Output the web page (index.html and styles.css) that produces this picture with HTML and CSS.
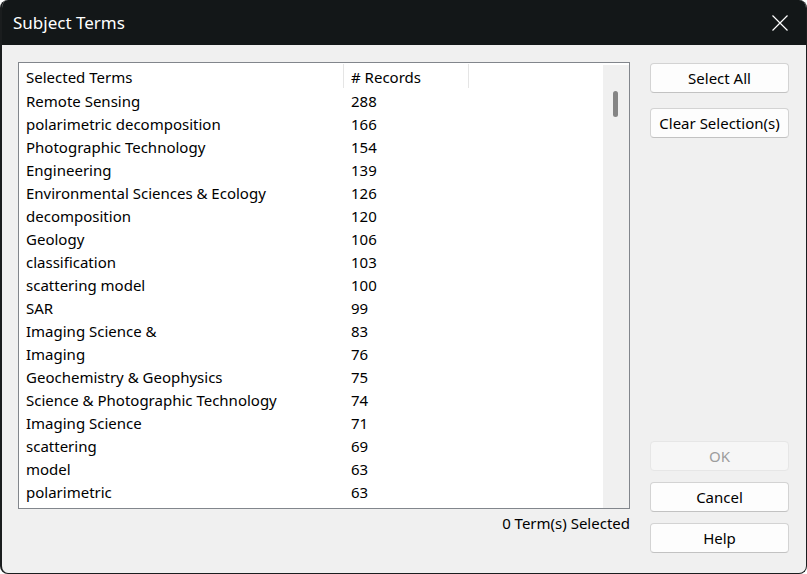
FILE: index.html
```html
<!DOCTYPE html>
<html>
<head>
<meta charset="utf-8">
<link rel="stylesheet" href="styles.css">
</head>
<body>
<div class="window">
  <div class="titlebar">
    <span class="title">Subject Terms</span>
    <svg class="close" width="16" height="16" viewBox="0 0 16 16"><path d="M0.5 0.5 L15.5 15.5 M15.5 0.5 L0.5 15.5" stroke="#ffffff" stroke-width="1.2" fill="none"/></svg>
  </div>
  <div class="content">
    <div class="left">
      <div class="listbox">
        <div class="table">
          <div class="row header">
            <div class="c1">Selected Terms</div>
            <div class="c2">#&nbsp;Records</div>
            <div class="c3"></div>
          </div>
          <div class="row"><div class="c1">Remote Sensing</div><div class="c2">288</div></div>
          <div class="row"><div class="c1">polarimetric decomposition</div><div class="c2">166</div></div>
          <div class="row"><div class="c1">Photographic Technology</div><div class="c2">154</div></div>
          <div class="row"><div class="c1">Engineering</div><div class="c2">139</div></div>
          <div class="row"><div class="c1">Environmental Sciences &amp; Ecology</div><div class="c2">126</div></div>
          <div class="row"><div class="c1">decomposition</div><div class="c2">120</div></div>
          <div class="row"><div class="c1">Geology</div><div class="c2">106</div></div>
          <div class="row"><div class="c1">classification</div><div class="c2">103</div></div>
          <div class="row"><div class="c1">scattering model</div><div class="c2">100</div></div>
          <div class="row"><div class="c1">SAR</div><div class="c2">99</div></div>
          <div class="row"><div class="c1">Imaging Science &amp;</div><div class="c2">83</div></div>
          <div class="row"><div class="c1">Imaging</div><div class="c2">76</div></div>
          <div class="row"><div class="c1">Geochemistry &amp; Geophysics</div><div class="c2">75</div></div>
          <div class="row"><div class="c1">Science &amp; Photographic Technology</div><div class="c2">74</div></div>
          <div class="row"><div class="c1">Imaging Science</div><div class="c2">71</div></div>
          <div class="row"><div class="c1">scattering</div><div class="c2">69</div></div>
          <div class="row"><div class="c1">model</div><div class="c2">63</div></div>
          <div class="row"><div class="c1">polarimetric</div><div class="c2">63</div></div>
        </div>
        <div class="scrollbar"><div class="thumb"></div></div>
      </div>
      <div class="status">0 Term(s) Selected</div>
    </div>
    <div class="right">
      <button class="btn">Select All</button>
      <button class="btn">Clear Selection(s)</button>
      <div class="spacer"></div>
      <button class="btn disabled">OK</button>
      <button class="btn">Cancel</button>
      <button class="btn">Help</button>
    </div>
  </div>
</div>
</body>
</html>
```
FILE: styles.css
```css
html, body {
  margin: 0;
  padding: 0;
  background: #ffffff;
}
body {
  font-family: "Noto Sans", "Open Sans", sans-serif;
  font-size: 15px;
  color: #000000;
}
.window {
  box-sizing: border-box;
  width: 807px;
  height: 574px;
  border-radius: 8px;
  overflow: hidden;
  background: #f0f0f0;
  border: 1px solid #1a1d1e;
  border-top: none;
  border-left-width: 2px;
  display: flex;
  flex-direction: column;
}
.titlebar {
  height: 45px;
  flex: none;
  background: #131718;
  display: flex;
  align-items: center;
  justify-content: space-between;
  padding: 0 18px 0 11px;
}
.title {
  color: #ffffff;
  font-size: 17px;
  margin-top: -1px;
}
.close {
  display: block;
}
.content {
  flex: 1;
  display: flex;
  gap: 20px;
  padding: 17px 0 20px 16px;
}
.left {
  width: 612px;
  display: flex;
  flex-direction: column;
}
.listbox {
  box-sizing: border-box;
  height: 447px;
  border: 1px solid #82868c;
  background: #ffffff;
  display: flex;
  padding: 1px 0 0 0;
}
.table {
  flex: 1;
}
.row {
  display: flex;
  height: 23px;
  align-items: center;
  white-space: nowrap;
}
.row.header {
  height: 25px;
  align-items: flex-start;
  line-height: 27px;
}
.c1 {
  width: 325px;
  box-sizing: border-box;
  padding-left: 7px;
}
.c2 {
  width: 125px;
  box-sizing: border-box;
  padding-left: 7px;
}
.c3 {
  flex: 1;
}
.header .c1, .header .c2 {
  border-right: 1px solid #e5e5e5;
  height: 24px;
}
.scrollbar {
  width: 26px;
  flex: none;
  background: #f0f0f0;
  margin-top: 1px;
  position: relative;
}
.thumb {
  position: absolute;
  left: 10px;
  top: 26px;
  width: 5px;
  height: 26px;
  border-radius: 3px;
  background: #858585;
}
.status {
  text-align: right;
  margin-top: 3px;
  line-height: 22px;
}
.right {
  width: 139px;
  display: flex;
  flex-direction: column;
  gap: 15px;
  padding-top: 1px;
}
.spacer {
  flex: 1;
  margin-top: -15px;
}
.right .btn:nth-of-type(n+4) {
  margin-top: -4px;
}
.right .disabled {
  margin-top: 0;
}
.btn {
  box-sizing: border-box;
  height: 30px;
  width: 139px;
  flex: none;
  background: #fdfdfd;
  border: 1px solid #d3d3d3;
  border-bottom-color: #c2c2c2;
  border-radius: 4px;
  font-family: inherit;
  font-size: 15px;
  color: #000000;
  padding: 0;
}
.btn.disabled {
  background: #f6f6f6;
  color: #9d9d9d;
  border-color: #e6e6e6;
}
```
